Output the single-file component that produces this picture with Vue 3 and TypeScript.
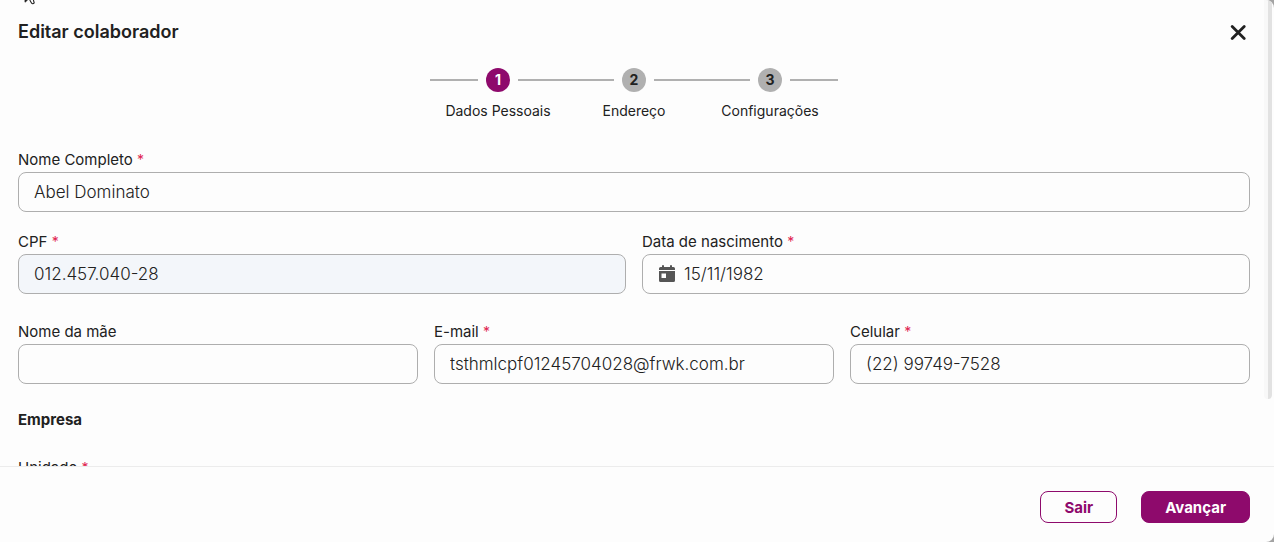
<script setup lang="ts">
import { reactive, ref } from 'vue'

interface Field {
  id: string
  label: string
  type: string
  required: boolean
  readonly?: boolean
  calendar?: boolean
}

const steps: string[] = ['Dados Pessoais', 'Endereço', 'Configurações']
const current = ref(0)

const rows: Field[][] = [
  [{ id: 'nome', label: 'Nome Completo', type: 'text', required: true }],
  [
    { id: 'cpf', label: 'CPF', type: 'text', required: true, readonly: true },
    { id: 'nascimento', label: 'Data de nascimento', type: 'text', required: true, calendar: true },
  ],
  [
    { id: 'mae', label: 'Nome da mãe', type: 'text', required: false },
    { id: 'email', label: 'E-mail', type: 'email', required: true },
    { id: 'celular', label: 'Celular', type: 'tel', required: true },
  ],
]

const values = reactive<Record<string, string>>({
  nome: 'Abel Dominato',
  cpf: '012.457.040-28',
  nascimento: '15/11/1982',
  mae: '',
  email: 'tsthmlcpf01245704028@frwk.com.br',
  celular: '(22) 99749-7528',
  unidade: '',
})

function advance(): void {
  current.value = Math.min(current.value + 1, steps.length - 1)
}
</script>

<template>
  <div class="backdrop">
    <form class="dialog" @submit.prevent="advance">
      <div class="body">
        <header class="head">
          <h1>Editar colaborador</h1>
          <button type="button" class="close" aria-label="Fechar">
            <svg width="16" height="16" viewBox="0 0 16 16">
              <path d="M2.2 2.4 14.2 14.4M14.2 2.4 2.2 14.4" fill="none" stroke="#212121" stroke-width="2.8" stroke-linecap="round" />
            </svg>
          </button>
        </header>

        <ol class="steps">
          <li v-for="(step, i) in steps" :key="step" class="step" :class="{ active: i === current }">
            <div class="track"><span class="dot">{{ i + 1 }}</span></div>
            <span class="caption">{{ step }}</span>
          </li>
        </ol>

        <div class="rows">
          <div v-for="(row, r) in rows" :key="r" class="row">
            <div v-for="f in row" :key="f.id" class="field">
              <label :for="f.id">{{ f.label }} <b v-if="f.required" class="mark">*</b></label>
              <div class="control">
                <svg v-if="f.calendar" class="calendar" width="16" height="18" viewBox="0 0 16 18">
                  <path d="M1.5 2H3V1a1 1 0 0 1 2 0v1h6V1a1 1 0 0 1 2 0v1h1.5A1.5 1.5 0 0 1 16 3.5V5H0V3.5A1.5 1.5 0 0 1 1.5 2Z" fill="#555" />
                  <path fill-rule="evenodd" d="M0 6h16v9.5A1.5 1.5 0 0 1 14.5 17h-13A1.5 1.5 0 0 1 0 15.5ZM2.5 8.5V13H7V8.5Z" fill="#555" />
                </svg>
                <input
                  :id="f.id"
                  v-model="values[f.id]"
                  :type="f.type"
                  :readonly="f.readonly"
                  :class="{ dated: f.calendar }"
                />
              </div>
            </div>
          </div>
        </div>

        <h2>Empresa</h2>
        <div class="field">
          <label for="unidade">Unidade <b class="mark">*</b></label>
          <input id="unidade" v-model="values.unidade" type="text" />
        </div>
      </div>

      <footer class="foot">
        <button type="button" class="btn outline">Sair</button>
        <button type="submit" class="btn solid">Avançar</button>
      </footer>

      <div class="scrollbar"></div>
      <svg class="pointer" width="14" height="6" viewBox="0 0 14 6">
        <path d="M1 0v2.2L3.6 0" fill="#222" stroke="#222" stroke-width="0.8" />
        <path d="M5.8 0l1.8 3.2q1.2 1.2 2.6-.4L9.4 0" fill="#fff" stroke="#222" stroke-width="1.1" />
      </svg>
    </form>
  </div>
</template>

<style>
body {
  margin: 0;
}
</style>

<style scoped>
.backdrop {
  height: 100vh;
  background: #a3a3a3;
  overflow: hidden;
}
.dialog {
  position: relative;
  display: flex;
  flex-direction: column;
  height: 100%;
  background: #fdfdfd;
  border-radius: 0 8px 8px 0;
  overflow: hidden;
  color: #212121;
  font-family: Inter, "Liberation Sans", sans-serif;
  font-size: 14px;
  line-height: 20px;
}
.body {
  flex: 1;
  min-height: 0;
  overflow: hidden;
  padding: 20px 24px 0 18px;
}
.head {
  display: flex;
  justify-content: space-between;
  align-items: center;
  height: 24px;
}
h1 {
  margin: 0;
  font-size: 18px;
  line-height: 24px;
  font-weight: 600;
}
.close {
  display: flex;
  padding: 4px;
  border: 0;
  background: none;
}
.steps {
  display: flex;
  justify-content: center;
  margin: 24px 0 29px;
  padding: 0;
  list-style: none;
}
.step {
  width: 136px;
  text-align: center;
}
.track {
  display: flex;
  align-items: center;
  gap: 8px;
}
.track::before,
.track::after {
  content: "";
  flex: 1;
  height: 2px;
  background: #b0b0b0;
}
.dot {
  width: 24px;
  border-radius: 50%;
  background: #b0b0b0;
  line-height: 24px;
  font-weight: 700;
}
.active .dot {
  background: #8e0a6c;
  color: #fff;
}
.caption {
  display: block;
  margin-top: 9px;
}
.rows {
  display: flex;
  flex-direction: column;
  gap: 20px;
}
.row {
  display: grid;
  grid-auto-flow: column;
  grid-auto-columns: minmax(0, 1fr);
  gap: 16px;
}
.row:last-child {
  margin-top: 8px;
}
label {
  display: block;
  margin-bottom: 2px;
  font-size: 15px;
}
.mark {
  color: #e0244f;
  font-size: 14px;
  font-weight: 400;
}
.control {
  position: relative;
}
.calendar {
  position: absolute;
  left: 17px;
  top: 11px;
}
input {
  display: block;
  box-sizing: border-box;
  width: 100%;
  height: 40px;
  padding: 0 15px;
  border: 1px solid #aeaeae;
  border-radius: 8px;
  background: #fdfdfd;
  color: #212121;
  font-family: inherit;
  font-size: 17px;
  font-weight: 300;
  outline: 0;
}
input:read-only {
  background: #f3f6fa;
}
input.dated {
  padding-left: 41px;
}
h2 {
  margin: 26px 0 28px;
  font-size: 15px;
  line-height: 20px;
  font-weight: 700;
}
.foot {
  display: flex;
  justify-content: flex-end;
  gap: 24px;
  padding: 24px 24px 19px;
  border-top: 1px solid #ececec;
}
.btn {
  height: 32px;
  padding: 0 23px;
  border: 1px solid #8e0a6c;
  border-radius: 8px;
  font-family: inherit;
  font-size: 15px;
  font-weight: 700;
}
.outline {
  background: #fdfdfd;
  color: #8e0a6c;
}
.solid {
  background: #8e0a6c;
  color: #fff;
}
.scrollbar {
  position: absolute;
  top: 0;
  right: 2px;
  box-sizing: border-box;
  width: 8px;
  height: 73.6%;
  border-left: 4px solid #f8f8f8;
  border-radius: 0 0 4px 4px;
  background: #e2e2e2;
}
.pointer {
  position: absolute;
  left: 24px;
  top: 0;
}
</style>
